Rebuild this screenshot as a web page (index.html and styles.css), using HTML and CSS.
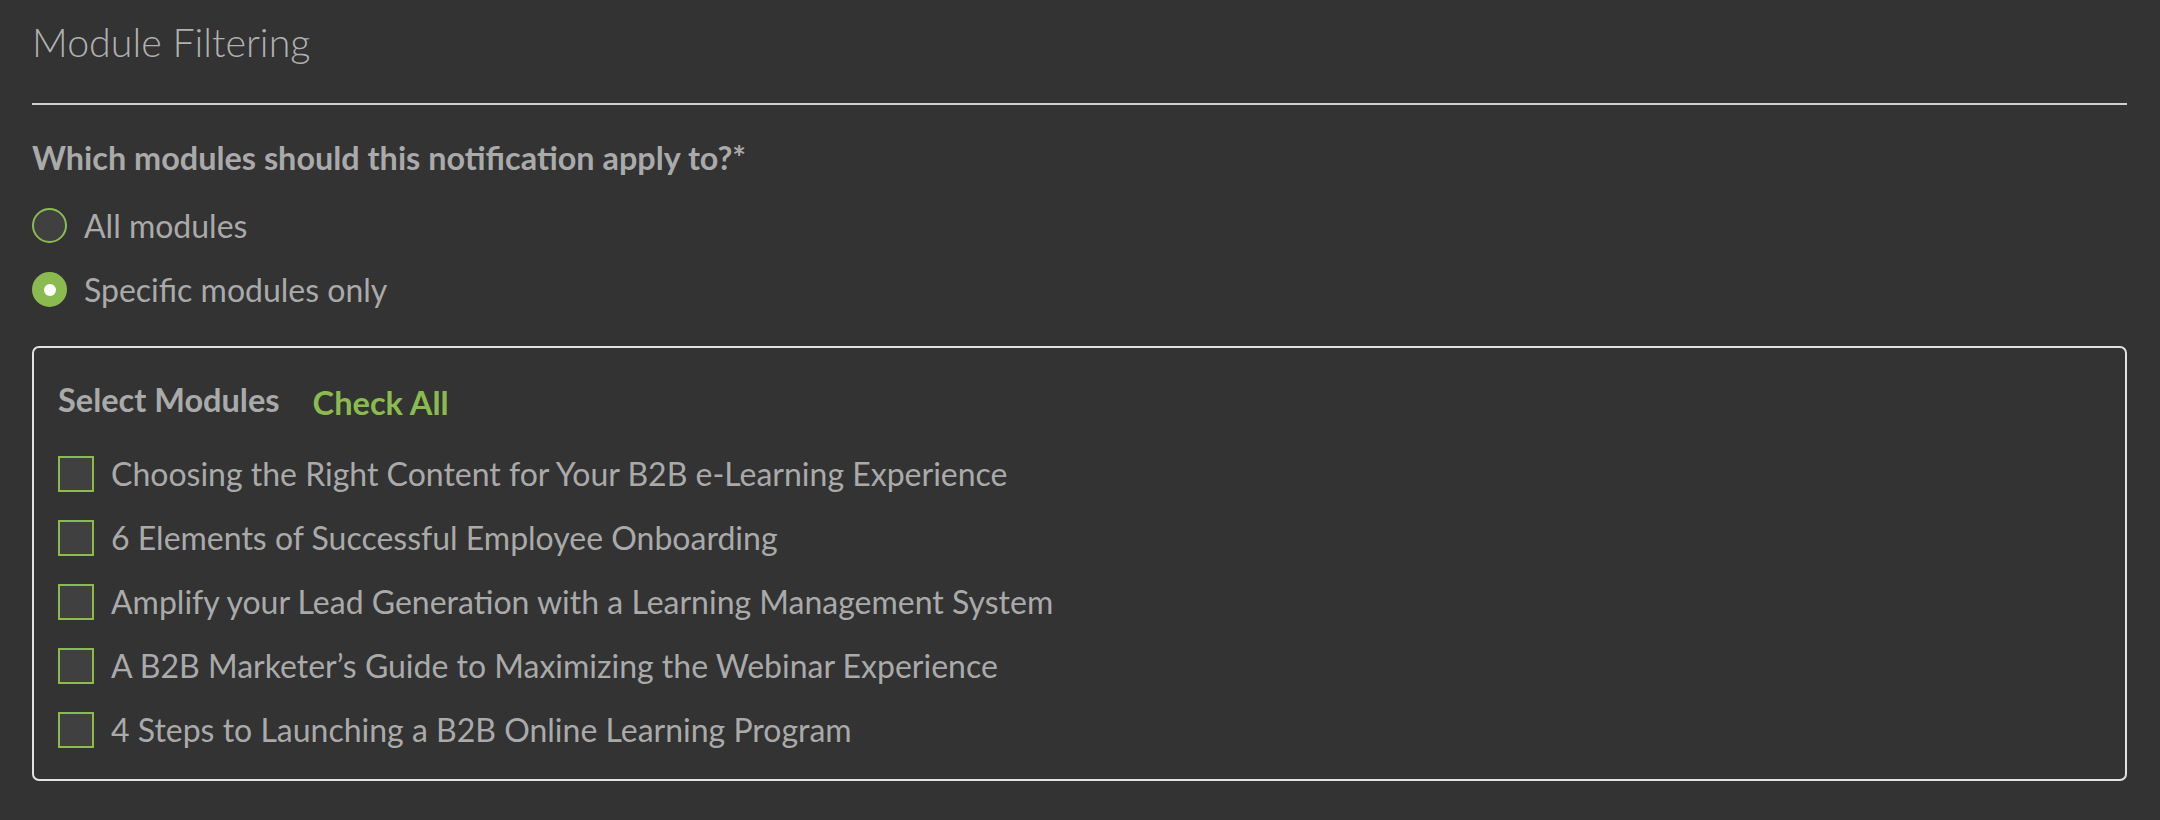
FILE: index.html
```html
<!DOCTYPE html>
<html>
<head>
<meta charset="utf-8">
<link rel="stylesheet" href="styles.css">
</head>
<body>
<div class="page">
  <h2 class="title">Module Filtering</h2>
  <hr class="divider">
  <div class="question">Which modules should this notification apply to?*</div>
  <div class="radios">
    <label class="radio-row"><span class="radio"></span><span class="label">All modules</span></label>
    <label class="radio-row"><span class="radio checked"></span><span class="label">Specific modules only</span></label>
  </div>
  <div class="box">
    <div class="box-head">
      <span class="box-title">Select Modules</span>
      <span class="check-all">Check All</span>
    </div>
    <div class="items">
      <label class="item"><span class="checkbox"></span><span class="label">Choosing the Right Content for Your B2B e-Learning Experience</span></label>
      <label class="item"><span class="checkbox"></span><span class="label">6 Elements of Successful Employee Onboarding</span></label>
      <label class="item"><span class="checkbox"></span><span class="label">Amplify your Lead Generation with a Learning Management System</span></label>
      <label class="item"><span class="checkbox"></span><span class="label">A B2B Marketer’s Guide to Maximizing the Webinar Experience</span></label>
      <label class="item"><span class="checkbox"></span><span class="label">4 Steps to Launching a B2B Online Learning Program</span></label>
    </div>
  </div>
</div>
</body>
</html>
```

FILE: styles.css
```css
html, body {
  margin: 0;
  padding: 0;
  background: #333333;
}
body {
  font-family: Lato, "Open Sans", sans-serif;
  color: #aaaaaa;
}
.page {
  padding: 0 33px 0 32px;
}
.title {
  margin: 0;
  padding-top: 18px;
  font-size: 39.4px;
  line-height: 48px;
  font-weight: 300;
  color: #b0b0b0;
}
.divider {
  margin: 37px 0 0 0;
  border: 0;
  height: 2px;
  background: #d0d0d0;
}
.question {
  margin-top: 33px;
  font-size: 32.4px;
  line-height: 40px;
  font-weight: 700;
  color: #aaaaaa;
}
.radios {
  margin-top: 30px;
  display: flex;
  flex-direction: column;
  gap: 29px;
}
.radio-row {
  display: flex;
  align-items: center;
  gap: 17px;
  height: 35px;
}
.radio {
  box-sizing: border-box;
  width: 35px;
  height: 35px;
  border-radius: 50%;
  border: 2px solid #8bbb50;
  background: #404040;
  flex: none;
  position: relative;
}
.radio.checked {
  background: #8bbb50;
}
.radio.checked::after {
  content: "";
  position: absolute;
  left: 50%;
  top: 50%;
  width: 12px;
  height: 12px;
  margin: -6px 0 0 -6px;
  border-radius: 50%;
  background: #ffffff;
}
.label {
  font-size: 32px;
  line-height: 36px;
  color: #aaaaaa;
  white-space: nowrap;
}
.box {
  margin-top: 39px;
  box-sizing: border-box;
  border: 2px solid #e2e2e2;
  border-radius: 7px;
  height: 435px;
  padding: 32px 24px 0 24px;
}
.box-head {
  display: flex;
  align-items: flex-start;
  gap: 33px;
}
.box-title {
  font-size: 32.5px;
  line-height: 40px;
  font-weight: 700;
  color: #aaaaaa;
}
.check-all {
  padding-top: 3px;
  font-size: 32.6px;
  line-height: 40px;
  font-weight: 700;
  color: #8bbb50;
}
.items {
  margin-top: 33px;
  display: flex;
  flex-direction: column;
  gap: 28px;
}
.item {
  display: flex;
  align-items: center;
  gap: 17px;
  height: 36px;
}
.checkbox {
  box-sizing: border-box;
  width: 36px;
  height: 36px;
  border: 2px solid #8bbb50;
  background: #404040;
  flex: none;
}
```
